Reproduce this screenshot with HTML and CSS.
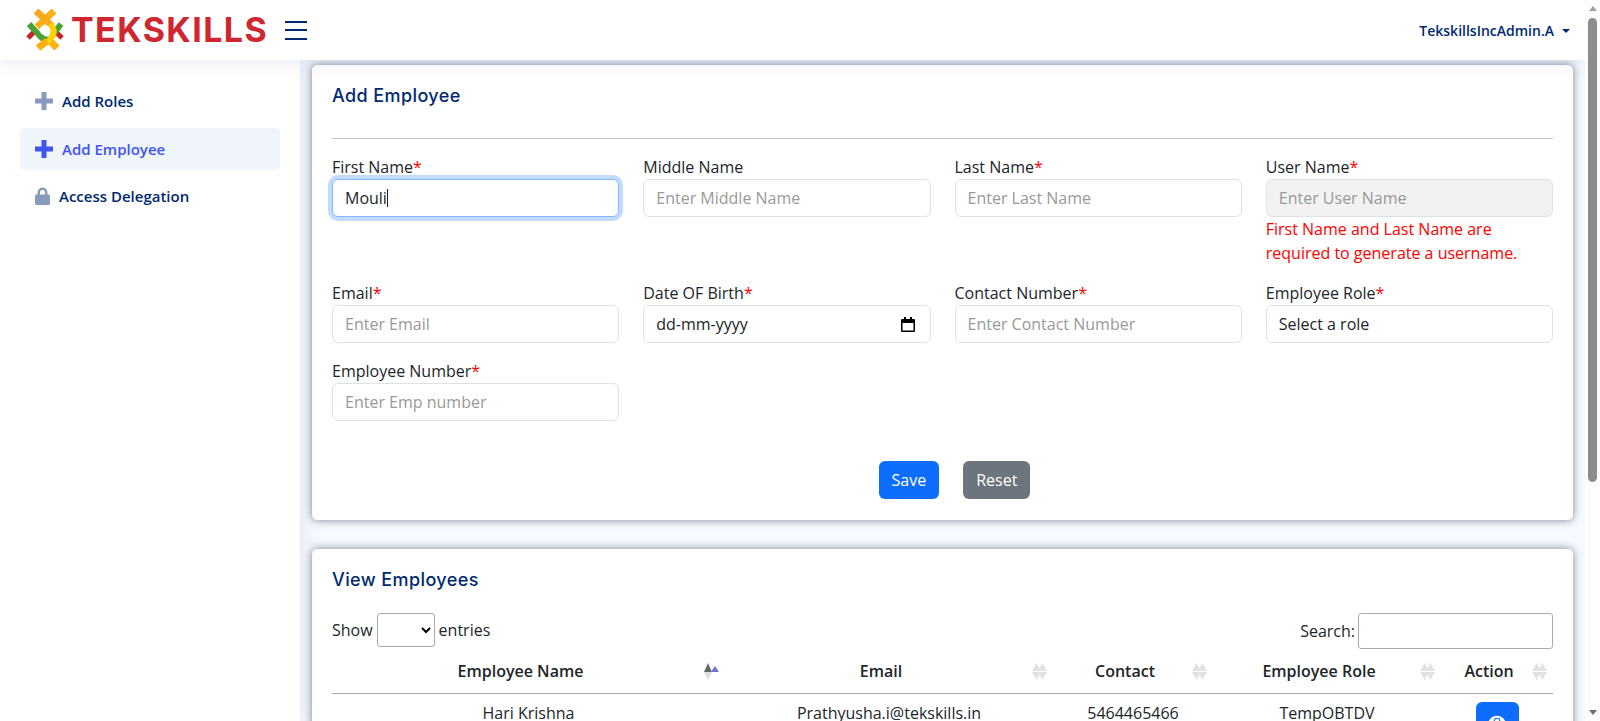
FILE: index.html
```html
<!DOCTYPE html>
<html lang="en">
<head>
    <meta charset="UTF-8">
    <title>Add Employee</title>
    <link rel="stylesheet" href="styles.css">
</head>
<body>
    <div class="page">
        <div class="app">
            <header class="topbar">
                <div class="brand">
                    <svg class="brand-mark" viewBox="0 0 40 42" width="40" height="42" fill="none">
                        <path d="M3 29 L10 22" stroke="#c9232b" stroke-width="5"/>
                        <path d="M37 29 L30 22" stroke="#c9232b" stroke-width="5"/>
                        <path d="M29 2 L12 18" stroke="#fbb116" stroke-width="7"/>
                        <path d="M32 39 L22 29" stroke="#fbb116" stroke-width="7"/>
                        <path d="M4 15 L14 26 Q20 33 26 30" stroke="#4aa135" stroke-width="6"/>
                        <path d="M36 15 L27 27" stroke="#4aa135" stroke-width="6"/>
                        <path d="M11 2 L27 17" stroke="#f9a91d" stroke-width="7"/>
                        <path d="M25 15 C32 22 28 30 20 34" stroke="#ffd200" stroke-width="6"/>
                        <path d="M22 32 L13 39" stroke="#fbb116" stroke-width="7"/>
                        <circle cx="20" cy="21" r="5" fill="#fff"/>
                    </svg>
                    <span class="brand-name">TEKSKILLS</span>
                </div>
                <button class="menu-toggle"><span></span><span></span><span></span></button>
                <div class="user-menu">TekskillsIncAdmin.A<span class="caret"></span></div>
            </header>
            <div class="layout">
                <nav class="sidebar">
                    <a class="nav-item">
                        <svg class="plus-icon" viewBox="0 0 18 18"><path d="M6.500 0h5v6.500H18v5h-6.500V18h-5v-6.500H0v-5h6.500z"/></svg>
                        <span>Add Roles</span>
                    </a>
                    <a class="nav-item active">
                        <svg class="plus-icon" viewBox="0 0 18 18"><path d="M6.500 0h5v6.500H18v5h-6.500V18h-5v-6.500H0v-5h6.500z"/></svg>
                        <span>Add Employee</span>
                    </a>
                    <a class="nav-item">
                        <svg class="lock-icon" viewBox="0 0 15 18"><path d="M2.500 7.500V5.500a5 5 0 0 1 10 0v2h1A1.500 1.500 0 0 1 15 9v7.500a1.500 1.500 0 0 1-1.500 1.500h-12A1.500 1.500 0 0 1 0 16.500V9a1.500 1.500 0 0 1 1.500-1.500zm2.500 0h5v-2a2.500 2.500 0 0 0-5 0z"/></svg>
                        <span>Access Delegation</span>
                    </a>
                </nav>
                <main class="content">
                    <section class="card form-card">
                        <h3 class="card-title">Add Employee</h3>
                        <hr class="divider">
                        <div class="form-grid">
                            <div class="field">
                                <label>First Name<em>*</em></label>
                                <div class="input focused">Mouli<i class="cursor"></i></div>
                            </div>
                            <div class="field">
                                <label>Middle Name</label>
                                <input type="text" placeholder="Enter Middle Name">
                            </div>
                            <div class="field">
                                <label>Last Name<em>*</em></label>
                                <input type="text" placeholder="Enter Last Name">
                            </div>
                            <div class="field">
                                <label>User Name<em>*</em></label>
                                <input type="text" placeholder="Enter User Name" disabled>
                                <p class="error">First Name and Last Name are required to generate a username.</p>
                            </div>
                            <div class="field">
                                <label>Email<em>*</em></label>
                                <input type="text" placeholder="Enter Email">
                            </div>
                            <div class="field">
                                <label>Date OF Birth<em>*</em></label>
                                <div class="input date">dd-mm-yyyy
                                    <svg class="cal-icon" viewBox="0 0 14 15" width="14" height="15"><path d="M3 0h2v2h4V0h2v2h2a1 1 0 0 1 1 1v11a1 1 0 0 1-1 1H1a1 1 0 0 1-1-1V3a1 1 0 0 1 1-1h2zM1.500 6v7.500h11V6z"/></svg>
                                </div>
                            </div>
                            <div class="field">
                                <label>Contact Number<em>*</em></label>
                                <input type="text" placeholder="Enter Contact Number">
                            </div>
                            <div class="field">
                                <label>Employee Role<em>*</em></label>
                                <div class="input">Select a role</div>
                            </div>
                            <div class="field">
                                <label>Employee Number<em>*</em></label>
                                <input type="text" placeholder="Enter Emp number">
                            </div>
                        </div>
                        <div class="form-actions">
                            <button class="btn btn-primary">Save</button>
                            <button class="btn btn-secondary">Reset</button>
                        </div>
                    </section>
                    <section class="card table-card">
                        <h3 class="card-title">View Employees</h3>
                        <div class="table-tools">
                            <div class="entries">Show <select class="entries-select"></select> entries</div>
                            <div class="search">Search: <input type="text" class="search-input"></div>
                        </div>
                        <table class="data-table">
                            <thead>
                                <tr>
                                    <th class="col-name">Employee Name
                                        <svg class="sort" viewBox="0 0 15 17">
                                            <path d="M4 0l4 9H0z" fill="#666"/>
                                            <path d="M4 17l4-8H0z" fill="#e0e0e0"/>
                                            <path d="M11 3l4 6H7z" fill="#6f73cf"/>
                                        </svg>
                                    </th>
                                    <th class="col-email">Email
                                        <svg class="sort" viewBox="0 0 15 17"><path class="sort-off" d="M4.500 0L9 8H0zM4.500 17L9 9H0zM10.500 0L15 8H6zM10.500 17L15 9H6z"/></svg>
                                    </th>
                                    <th class="col-contact">Contact
                                        <svg class="sort" viewBox="0 0 15 17"><path class="sort-off" d="M4.500 0L9 8H0zM4.500 17L9 9H0zM10.500 0L15 8H6zM10.500 17L15 9H6z"/></svg>
                                    </th>
                                    <th class="col-role">Employee Role
                                        <svg class="sort" viewBox="0 0 15 17"><path class="sort-off" d="M4.500 0L9 8H0zM4.500 17L9 9H0zM10.500 0L15 8H6zM10.500 17L15 9H6z"/></svg>
                                    </th>
                                    <th class="col-action">Action
                                        <svg class="sort" viewBox="0 0 15 17"><path class="sort-off" d="M4.500 0L9 8H0zM4.500 17L9 9H0zM10.500 0L15 8H6zM10.500 17L15 9H6z"/></svg>
                                    </th>
                                </tr>
                            </thead>
                            <tbody>
                                <tr>
                                    <td>Hari Krishna</td>
                                    <td>Prathyusha.i@tekskills.in</td>
                                    <td>5464465466</td>
                                    <td>TempOBTDV</td>
                                    <td>
                                        <button class="eye-btn">
                                            <svg viewBox="0 0 24 24" width="18" height="18" fill="#fff"><path fill-rule="evenodd" d="M12 5C6.500 5 2.500 9 1 12c1.500 3 5.500 7 11 7s9.500-4 11-7c-1.500-3-5.500-7-11-7zm0 11.500a4.500 4.500 0 1 1 0-9 4.500 4.500 0 0 1 0 9z"/><circle cx="12" cy="12" r="3"/></svg>
                                        </button>
                                    </td>
                                </tr>
                            </tbody>
                        </table>
                    </section>
                </main>
            </div>
        </div>
        <div class="scrollbar">
            <span class="arrow-up"></span>
            <div class="thumb"></div>
            <span class="arrow-down"></span>
        </div>
    </div>
</body>
</html>
```
FILE: styles.css
```css
* {
    box-sizing: border-box;
}
html, body {
    margin: 0;
    height: 721px;
    overflow: hidden;
}
body {
    background-color: #fff;
    color: #212529;
    font-family: "Open Sans", "Noto Sans", sans-serif;
    font-size: 16px;
}
.page {
    display: flex;
    height: 721px;
}
.app {
    flex: 1;
    min-width: 0;
    overflow: hidden;
}
.topbar {
    display: flex;
    align-items: center;
    height: 60px;
    padding: 0 15px 0 25px;
    background-color: #fff;
    box-shadow: 0 2px 20px rgba(1, 41, 112, 0.1);
    position: relative;
    z-index: 2;
}
.brand {
    display: flex;
    align-items: center;
    width: 260px;
}
.brand-mark {
    flex: none;
}
.brand-name {
    margin-left: 6px;
    color: #cf2630;
    font-family: "Inter", sans-serif;
    font-size: 34px;
    font-weight: 700;
    line-height: 1;
    letter-spacing: 1.4px;
    white-space: nowrap;
}
.menu-toggle {
    display: flex;
    flex-direction: column;
    justify-content: space-between;
    width: 22px;
    height: 19px;
    padding: 0;
    border: none;
    background: none;
}
.menu-toggle span {
    display: block;
    height: 2px;
    background-color: #012970;
}
.user-menu {
    margin-left: auto;
    color: #012970;
    font-size: 14px;
    font-weight: 600;
}
.caret {
    display: inline-block;
    margin-left: 8px;
    vertical-align: 3px;
    border-top: 4px solid #012970;
    border-left: 4px solid transparent;
    border-right: 4px solid transparent;
}
.layout {
    display: flex;
    height: 661px;
}
.sidebar {
    width: 300px;
    flex: none;
    padding: 20px;
    background-color: #fff;
    box-shadow: 0 0 20px rgba(1, 41, 112, 0.1);
    position: relative;
    z-index: 1;
}
.nav-item {
    display: flex;
    align-items: center;
    height: 42px;
    margin-bottom: 6px;
    padding-left: 15px;
    border-radius: 5px;
    color: #012970;
    font-size: 15px;
    font-weight: 600;
}
.nav-item span {
    margin-left: 9px;
}
.nav-item.active {
    margin-bottom: 5px;
    background-color: #f0f4fb;
    color: #4154f1;
}
.plus-icon {
    width: 18px;
    height: 18px;
    fill: #899bbd;
}
.active .plus-icon {
    fill: #4154f1;
}
.lock-icon {
    width: 15px;
    height: 18px;
    fill: #899bbd;
}
.content {
    flex: 1;
    min-width: 0;
    padding: 5px 12px 0;
    background-color: #f6f9ff;
}
.card {
    padding: 20px;
    background-color: #fff;
    border-radius: 5px;
    box-shadow: 0 0 9px rgba(20, 30, 55, 0.55);
}
.form-card {
    height: 455px;
    margin-bottom: 29px;
}
.card-title {
    margin: 1px 0 0;
    color: #012970;
    font-family: "Inter", sans-serif;
    font-size: 18px;
    font-weight: 500;
    line-height: 20px;
    letter-spacing: 0.4px;
}
.divider {
    height: 1px;
    margin: 32px 0 16px;
    border: none;
    background-color: #c4c4c4;
}
.form-grid {
    display: grid;
    grid-template-columns: repeat(4, 1fr);
    column-gap: 24px;
    row-gap: 16px;
}
.field label {
    display: block;
    height: 24px;
    line-height: 24px;
}
.field em {
    color: red;
    font-style: normal;
}
.field input, .input {
    display: block;
    width: 100%;
    height: 38px;
    padding: 6px 12px;
    border: 1px solid #dee2e6;
    border-radius: 6px;
    background-color: #fff;
    color: #212529;
    font-family: inherit;
    font-size: 16px;
    line-height: 24px;
}
.field input::placeholder {
    color: #999;
}
.field input:disabled {
    background-color: #f2f2f2;
}
.input.focused {
    border-color: #86b7fe;
    box-shadow: 0 0 0 4px rgba(13, 110, 253, 0.25);
}
.cursor {
    display: inline-block;
    width: 1px;
    height: 18px;
    vertical-align: -3px;
    background-color: #212529;
}
.input.date {
    display: flex;
    align-items: center;
    justify-content: space-between;
    padding-right: 15px;
}
.error {
    margin: 0;
    color: red;
    line-height: 24px;
}
.form-actions {
    display: flex;
    justify-content: center;
    gap: 24px;
    margin-top: 40px;
    padding-left: 24px;
}
.btn {
    height: 38px;
    padding: 6px 12px;
    border: 1px solid transparent;
    border-radius: 6px;
    color: #fff;
    font-family: inherit;
    font-size: 16px;
}
.btn-primary {
    background-color: #0d6efd;
}
.btn-secondary {
    background-color: #6c757d;
}
.table-card {
    height: 300px;
}
.table-tools {
    display: flex;
    justify-content: space-between;
    height: 36px;
    margin-top: 23px;
}
.entries, .search {
    display: flex;
    align-items: center;
    gap: 4px;
}
.entries {
    height: 34px;
}
.search {
    gap: 3px;
}
.entries-select {
    width: 58px;
    height: 34px;
    border: 1px solid #aaa;
    border-radius: 3px;
    background-color: #fff;
}
.search-input {
    width: 195px;
    height: 36px;
    border: 1px solid #aaa;
    border-radius: 3px;
}
.data-table {
    width: 100%;
    border-collapse: collapse;
    table-layout: fixed;
}
.data-table th {
    position: relative;
    height: 44px;
    padding: 0 26px 0 10px;
    border-bottom: 1px solid #aaa;
    font-weight: 600;
    text-align: center;
}
.data-table td {
    padding: 8px 10px;
    text-align: center;
    vertical-align: top;
}
.col-name { width: 393px; }
.col-email { width: 328px; }
.col-contact { width: 160px; }
.col-role { width: 228px; }
.sort {
    position: absolute;
    right: 6px;
    top: 14px;
    width: 15px;
    height: 17px;
}
.sort-off {
    fill: #e2e2e2;
}
.eye-btn {
    display: inline-flex;
    align-items: center;
    justify-content: center;
    width: 43px;
    height: 38px;
    padding: 0;
    border: none;
    border-radius: 6px;
    background-color: #0d6efd;
}
.scrollbar {
    width: 15px;
    flex: none;
    display: flex;
    flex-direction: column;
    align-items: center;
    background-color: #fdfdfd;
}
.thumb {
    width: 9px;
    height: 464px;
    margin-top: 7px;
    border-radius: 5px;
    background-color: #8c8c8c;
}
.arrow-up {
    margin-top: 6px;
    border-bottom: 5px solid #a3a3a3;
    border-left: 4px solid transparent;
    border-right: 4px solid transparent;
}
.arrow-down {
    margin-top: auto;
    margin-bottom: 6px;
    border-top: 5px solid #6e6e6e;
    border-left: 4px solid transparent;
    border-right: 4px solid transparent;
}
```
